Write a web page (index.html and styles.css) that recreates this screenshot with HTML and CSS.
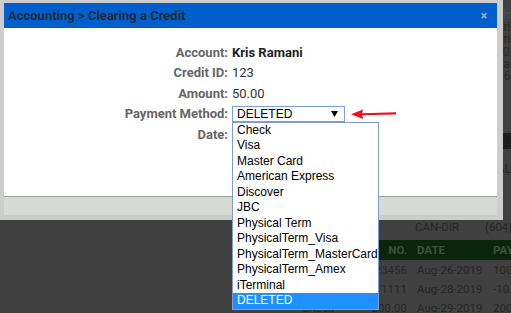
FILE: index.html
```html
<!DOCTYPE html>
<html lang="en">
<head>
    <meta charset="UTF-8">
    <meta name="viewport" content="width=device-width, initial-scale=1.0">
    <title>Accounting - Clearing a Credit</title>
    <link rel="stylesheet" href="styles.css">
</head>
<body>
    <!-- page behind the dialog, dimmed by the overlay -->
    <div class="page">
        <div class="side">
            <p class="side-title">Shipping</p>
            <p>Kris Ramani</p>
            <p>Kris Ramani</p>
            <p>1020 Main St</p>
            <p>Vancouver</p>
            <p>V6B 2T4</p>
        </div>
        <div class="side-bar"></div>
        <p class="side-all">ALL</p>

        <div class="info-row">
            <span class="info-type">CAN-DIR</span>
            <span class="info-phone">(604) 555-0199</span>
        </div>

        <div class="payments">
            <div class="pay-row pay-head">
                <span></span>
                <span class="col-no">NO.</span>
                <span>DATE</span>
                <span>PAYMENT</span>
            </div>
            <div class="pay-row">
                <span></span>
                <span class="col-no">123456</span>
                <span>Aug-26-2019</span>
                <span>100.00</span>
            </div>
            <div class="pay-row">
                <span></span>
                <span class="col-no">111111</span>
                <span>Aug-28-2019</span>
                <span>-10.00</span>
            </div>
            <div class="pay-row">
                <span>Check</span>
                <span class="col-no">200.00</span>
                <span>Aug-29-2019</span>
                <span>200.00</span>
            </div>
        </div>
    </div>

    <!-- dialog -->
    <div class="modal">
        <div class="modal-header">
            <h2>Accounting &gt; Clearing a Credit</h2>
            <span class="close">&times;</span>
        </div>

        <div class="modal-body">
            <div class="form">
                <span class="label">Account:</span>
                <span class="value strong">Kris Ramani</span>

                <span class="label">Credit ID:</span>
                <span class="value">123</span>

                <span class="label">Amount:</span>
                <span class="value">50.00</span>

                <span class="label">Payment Method:</span>
                <div class="value">
                    <div class="select">
                        <span>DELETED</span>
                        <svg class="caret" width="7" height="6" viewBox="0 0 7 6">
                            <path d="M0 0h7L3.5 6z" fill="#000"/>
                        </svg>
                        <ul class="options">
                            <li>Check</li>
                            <li>Visa</li>
                            <li>Master Card</li>
                            <li>American Express</li>
                            <li>Discover</li>
                            <li>JBC</li>
                            <li>Physical Term</li>
                            <li>PhysicalTerm_Visa</li>
                            <li>PhysicalTerm_MasterCard</li>
                            <li>PhysicalTerm_Amex</li>
                            <li>iTerminal</li>
                            <li class="selected">DELETED</li>
                        </ul>
                    </div>
                </div>

                <span class="label">Date:</span>
                <span class="value"></span>
            </div>

            <svg class="pointer" width="50" height="12" viewBox="0 0 50 12">
                <path d="M12 5.2L46 4.2L46 6.4L12 7.2z" fill="#e8141b"/>
                <path d="M1 6.3L13 1.5L12 6.2L13 11z" fill="#e8141b"/>
            </svg>
        </div>

        <div class="modal-footer"></div>
    </div>
</body>
</html>
```

FILE: styles.css
```css
* {
    margin: 0;
    padding: 0;
    box-sizing: border-box;
}

body {
    width: 511px;
    height: 313px;
    overflow: hidden;
    background: #404040;
    font-family: Roboto, 'Liberation Sans', sans-serif;
    position: relative;
}

/* Background page (seen through the overlay) */
.page {
    color: #262626;
    font-size: 12px;
}

.side {
    margin-left: 496px;
    padding-top: 9px;
    white-space: nowrap;
    line-height: 12.2px;
    font-size: 12px;
}

.side-title {
    color: #4e4e4e;
}

.side-bar {
    margin-top: 51px;
    height: 16px;
    background: #1d1d1d;
}

.side-all {
    margin-left: 497px;
    margin-top: 14px;
    line-height: 12px;
}

.info-row {
    display: flex;
    padding-left: 415px;
    margin-top: 46px;
    line-height: 13px;
    white-space: nowrap;
    font-size: 11.5px;
}

.info-type {
    flex: none;
    width: 70px;
}

.info-phone {
    flex: none;
}

.payments {
    margin-top: 6px;
    padding-left: 300px;
    white-space: nowrap;
    font-size: 11.5px;
}

.pay-row {
    display: grid;
    grid-template-columns: 48px 47px 66px 90px;
    column-gap: 10px;
    align-items: center;
    height: 19px;
    padding-left: 2px;
}

.pay-head {
    height: 20px;
    background: #0a250a;
    color: #3a553a;
    font-weight: bold;
}

.pay-row .col-no {
    text-align: right;
}

/* Dialog */
.modal {
    position: absolute;
    top: 0;
    left: 0;
    width: 503px;
    border-style: solid;
    border-color: #cdcdcd;
    border-width: 3px 6px 5px 4px;
    background: #fff;
}

.modal-header {
    height: 25px;
    background: #015fcd;
    display: flex;
    align-items: center;
    justify-content: space-between;
    padding: 0 10px 0 4px;
}

.modal-header h2 {
    font-size: 13px;
    font-weight: bold;
    color: #222b38;
}

.close {
    color: #a9b4c6;
    font-size: 12px;
    font-weight: bold;
}

.modal-body {
    position: relative;
    height: 168px;
    padding-top: 14px;
}

.form {
    display: grid;
    grid-template-columns: 224px auto;
    column-gap: 4px;
    grid-auto-rows: 20.5px;
    align-items: center;
    font-size: 13px;
}

.label {
    text-align: right;
    color: #666;
    font-weight: bold;
}

.value {
    color: #333;
}

.value.strong {
    color: #1e1e1e;
    font-weight: bold;
}

.select {
    position: relative;
    width: 113px;
    height: 16px;
    border: 1px solid #7b9fd9;
    display: flex;
    align-items: center;
    justify-content: space-between;
    padding: 0 6px 0 4px;
    font-family: 'Liberation Sans', Arial, sans-serif;
    font-size: 12px;
    color: #000;
}

.caret {
    margin-top: 1px;
}

.options {
    position: absolute;
    top: 15px;
    left: -1px;
    width: 147px;
    list-style: none;
    background: #fff;
    border: 1px solid #7f9ccd;
    z-index: 2;
}

.options li {
    height: 15.5px;
    line-height: 15.5px;
    padding-left: 4px;
}

.options li.selected {
    background: #1e90ff;
    color: #fff;
}

.pointer {
    position: absolute;
    left: 346px;
    top: 80px;
}

.modal-footer {
    height: 19px;
    border-top: 1px solid #9a9d98;
    background: #d7dbd5;
}
```
